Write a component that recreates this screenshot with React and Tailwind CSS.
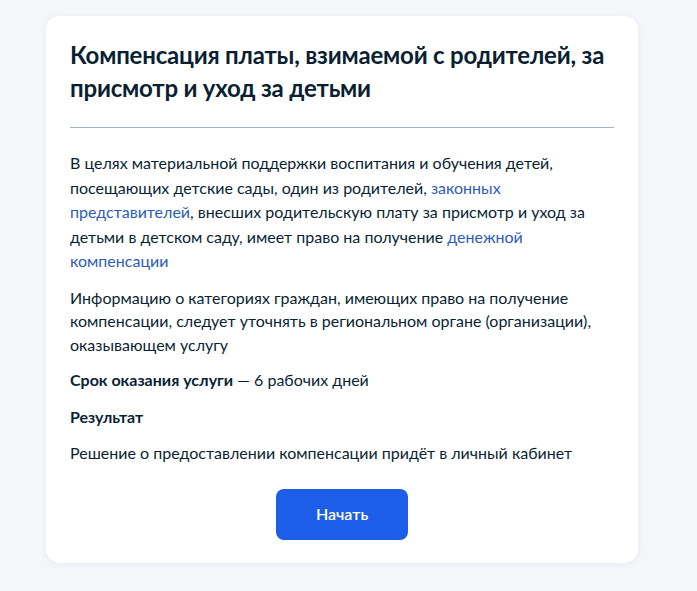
export default function App() {
  return (
    <div className="min-h-[591px] bg-[#f4f6fa] pt-4 pl-[46px]" style={{ fontFamily: 'Lato, "Noto Sans", sans-serif' }}>
      <div className="w-[592px] rounded-[14px] bg-white px-6 pt-[22px] pb-[23px] shadow-[0_1px_6px_rgba(120,140,170,0.12)]">
        <h1 className="text-[24px] font-bold leading-[33px] tracking-[-0.2px] text-[#0b1f33]">
          Компенсация платы, взимаемой с родителей, за присмотр и уход за детьми
        </h1>
        <div className="mt-[23px] mb-[23px] h-px bg-[#9fb2c2]"></div>

        <div className="text-[16px] leading-[24.5px] text-[#0b1f33]">
          <p>
            В целях материальной поддержки воспитания и обучения детей, посещающих детские сады, один из родителей,{' '}
            <a className="text-[#2d5cb8]">законных представителей</a>, внесших родительскую плату за присмотр и уход за
            детьми в детском саду, имеет право на получение{' '}
            <a className="text-[#2d5cb8]">денежной компенсации</a>
          </p>
          <p className="mt-3 leading-[23.5px]">
            Информацию о категориях граждан, имеющих право на получение компенсации, следует уточнять в региональном
            органе (организации), оказывающем услугу
          </p>
          <p className="mt-3">
            <span className="font-bold">Срок оказания услуги</span> — 6 рабочих дней
          </p>
          <p className="mt-3 font-bold">Результат</p>
          <p className="mt-3">Решение о предоставлении компенсации придёт в личный кабинет</p>
        </div>

        <div className="mt-[23px] flex justify-center">
          <button className="h-[51px] w-[132px] rounded-lg bg-[#1e5de8] text-[16px] font-semibold text-white">
            Начать
          </button>
        </div>
      </div>
    </div>
  );
}
